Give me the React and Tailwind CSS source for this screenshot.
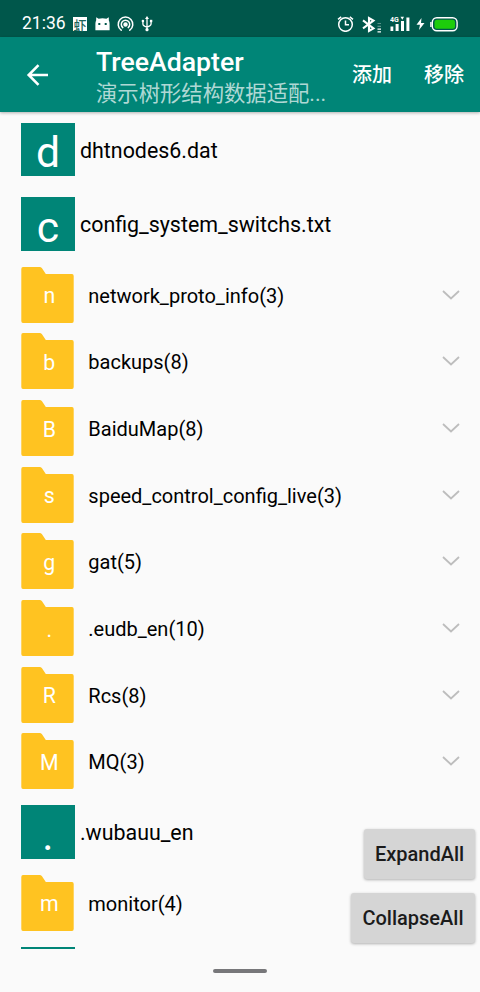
import React from "react";

const ROWS = [
  { kind: "file", letter: "d", name: "dhtnodes6.dat" },
  { kind: "file", letter: "c", name: "config_system_switchs.txt" },
  { kind: "folder", letter: "n", name: "network_proto_info(3)" },
  { kind: "folder", letter: "b", name: "backups(8)" },
  { kind: "folder", letter: "B", name: "BaiduMap(8)" },
  { kind: "folder", letter: "s", name: "speed_control_config_live(3)" },
  { kind: "folder", letter: "g", name: "gat(5)" },
  { kind: "folder", letter: ".", name: ".eudb_en(10)" },
  { kind: "folder", letter: "R", name: "Rcs(8)" },
  { kind: "folder", letter: "M", name: "MQ(3)" },
  { kind: "file", letter: ".", name: ".wubauu_en" },
  { kind: "folder", letter: "m", name: "monitor(4)" },
  { kind: "file", letter: "", name: "" },
];

function StatusBar() {
  return (
    <div className="flex h-[37px] shrink-0 items-center bg-[#00574b] pt-[11px] pl-[22px] pr-[22px] text-white">
      <span className="w-[44px] text-[17.5px] leading-none">21:36</span>
      <span className="ml-[7px] flex size-[14px] items-center justify-center bg-white font-['Noto_Sans_CJK_SC'] text-[13px] font-medium leading-none text-[#1c6459]">虾</span>
      <svg className="ml-[8px]" width="15" height="14" viewBox="0 0 15 14">
        <path d="M1.2 0.2L3.6 1.8Q7.5 0.6 11.4 1.8L13.8 0.2V3.2Q14.6 4.8 14.6 7V13.3H0.4V7Q0.4 4.8 1.2 3.2Z" fill="white" />
        <rect x="3.3" y="6" width="2" height="2" fill="#00574b" />
        <rect x="9.7" y="6" width="2" height="2" fill="#00574b" />
      </svg>
      <svg className="ml-[7px]" width="17" height="16" viewBox="0 0 17 16" fill="none" stroke="white" strokeWidth="1.5" strokeLinecap="round">
        <path d="M4.2 14.2A7.3 7.3 0 1 1 12.8 14.2M5.8 11.6A4.2 4.2 0 1 1 11.2 11.6" />
        <circle cx="8.5" cy="8.6" r="1.5" fill="white" />
      </svg>
      <svg className="ml-[7px]" width="12" height="16" viewBox="0 0 12 16" fill="none" stroke="white" strokeWidth="1.3">
        <path d="M6 2V13M1.9 5V8Q1.9 10 6 11M10.1 5V7.5Q10.1 10 6 11" />
        <path d="M6 0L8 3H4Z" fill="white" stroke="none" />
        <circle cx="1.9" cy="5" r="1.3" fill="white" stroke="none" />
        <path d="M8.9 3.8h2.4v2.4h-2.4z" fill="white" stroke="none" />
        <circle cx="6" cy="13.7" r="1.6" fill="white" stroke="none" />
      </svg>
      <div className="ml-auto flex items-center">
        <svg width="17" height="16" viewBox="0 0 17 16" fill="none" stroke="white" strokeWidth="1.5">
          <circle cx="8.5" cy="8.5" r="6.8" />
          <path d="M8.5 4.5V8.7H12M1 3.3L4.2 0.8M16 3.3L12.8 0.8" />
        </svg>
        <svg className="ml-[8px]" width="20" height="17" viewBox="0 0 20 17" fill="none" stroke="white" strokeWidth="2.1">
          <path d="M1 4.3L11.5 12.3L7 15V2L11.5 4.7L1 12.3" />
          <path d="M15.5 13.2H19M15.5 15.8H19" strokeWidth="1.2" />
          <path d="M15.5 7.5H19M15.5 10.3H19" strokeWidth="1.2" opacity="0.35" />
        </svg>
        <svg className="ml-[8px]" width="20" height="16" viewBox="0 0 20 16">
          <path d="M0.5 10.5h2.8v4.5H0.5zM5.6 8h3v7H5.6zM11 5h3v10H11zM16.4 1.5h3V15h-3z" fill="white" />
          <text x="0" y="5.8" fontSize="7" fontWeight="700" fill="white">4G</text>
          <path d="M10.5 0.8h3.5l-1.7 3z" fill="white" />
        </svg>
        <svg className="ml-[6px]" width="9" height="12" viewBox="0 0 9 12">
          <path d="M5.5 0L0.5 6.8H4L3 12L8.5 5H5Z" fill="white" />
        </svg>
        <svg className="ml-[5px]" width="28" height="15" viewBox="0 0 28 15">
          <rect x="2.3" y="0.8" width="24.8" height="13" rx="4.5" fill="none" stroke="white" strokeWidth="1.4" />
          <path d="M0.9 5v5" stroke="white" strokeWidth="1.4" />
          <rect x="4.5" y="2.8" width="20.5" height="9" rx="2.5" fill="#1dcc0b" />
        </svg>
      </div>
    </div>
  );
}

function Toolbar() {
  return (
    <div className="z-10 flex h-[75px] shrink-0 items-center bg-[#008577] pl-[26px] pr-[16px] text-white shadow-[0_1px_3px_rgba(0,0,0,0.3)]">
      <svg width="23" height="22" viewBox="0 0 23 22" fill="none" stroke="white" strokeWidth="2.6">
        <path d="M22 11H3M12.5 1.2L2.7 11L12.5 20.8" />
      </svg>
      <div className="ml-[47px] flex w-[236px] flex-col pt-[6px]">
        <span className="text-[26.67px] font-medium leading-[31px]">TreeAdapter</span>
        <span className="font-[Roboto,'Noto_Sans_CJK_SC',sans-serif] text-[21.33px] leading-[31px] text-white/70">演示树形结构数据适配...</span>
      </div>
      <div className="ml-auto flex gap-8 whitespace-nowrap text-[20px] font-medium leading-none">
        <span>添加</span>
        <span>移除</span>
      </div>
    </div>
  );
}

function FileRow({ letter, name }) {
  return (
    <div className="flex h-[74.67px] shrink-0 items-center pl-[21.33px]">
      <div className="flex size-[53.33px] items-center justify-center bg-[#008577] pt-[7px] text-[42.67px] leading-none text-white">{letter}</div>
      <span className="ml-[5.33px] pt-[3px] text-[21.4px] text-black">{name}</span>
    </div>
  );
}

function FolderRow({ letter, name }) {
  return (
    <div className="flex h-[66.67px] shrink-0 items-center pl-[21.33px] pr-5">
      <div className="grid h-[56px] w-[53px] place-items-center">
        <svg className="col-start-1 row-start-1" width="53" height="56" viewBox="0 0 53 56">
          <path d="M2 0H18.5Q20 0 21 1.3L24.8 7H51Q52.7 7 52.7 9V54Q52.7 56 51 56H2Q0.3 56 0.3 54V2Q0.3 0 2 0Z" fill="#ffc321" />
        </svg>
        <span className="col-start-1 row-start-1 pt-[3px] pl-[3px] text-[21.33px] leading-none text-white">{letter}</span>
      </div>
      <span className="ml-[14px] pt-[2px] text-[20px] text-black">{name}</span>
      <svg className="ml-auto" width="18" height="10" viewBox="0 0 18 10" fill="none" stroke="#bdbdbd" strokeWidth="1.8">
        <path d="M1 1L9 8.5L17 1" />
      </svg>
    </div>
  );
}

export default function App() {
  return (
    <div className="relative flex h-[992px] w-[480px] flex-col overflow-hidden bg-[#fafafa] font-[Roboto,'Noto_Sans_CJK_SC',sans-serif]">
      <StatusBar />
      <Toolbar />
      <div className="flex h-[837px] shrink-0 flex-col overflow-hidden">
        {ROWS.map((row, i) =>
          row.kind === "file" ? <FileRow key={i} {...row} /> : <FolderRow key={i} {...row} />
        )}
      </div>
      <div className="flex flex-1 items-center justify-center">
        <div className="h-1 w-[54px] rounded-full bg-[#77777a]" />
      </div>
      <div className="absolute right-[5px] bottom-[49px] flex flex-col items-end gap-[14px] text-[20px] font-medium text-[#1b1b1b]">
        <button className="h-[50px] w-[111px] rounded-[3px] bg-[#d5d5d5] shadow-[0_1px_3px_rgba(0,0,0,0.3)]">ExpandAll</button>
        <button className="h-[50px] w-[124px] rounded-[3px] bg-[#d5d5d5] shadow-[0_1px_3px_rgba(0,0,0,0.3)]">CollapseAll</button>
      </div>
    </div>
  );
}
